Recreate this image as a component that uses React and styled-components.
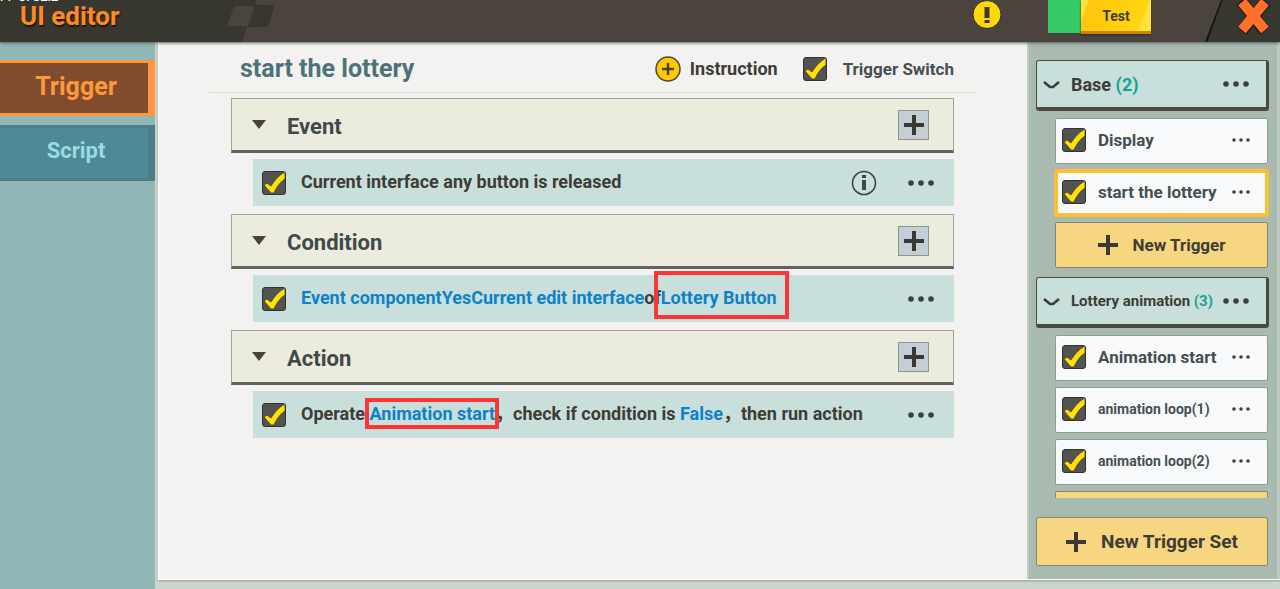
import React, { useState } from "react";
import styled, { createGlobalStyle, css } from "styled-components";

const GlobalStyle = createGlobalStyle`
  * {
    box-sizing: border-box;
  }

  html,
  body,
  #root {
    height: 100%;
    margin: 0;
  }

  body {
    overflow: hidden;
    background: #ccd5cc;
    font-family: Roboto, "Noto Sans CJK SC", sans-serif;
    font-weight: 700;
    color: #3d3c36;
  }

  button {
    font: inherit;
    color: inherit;
    border: none;
    padding: 0;
    background: none;
    cursor: pointer;
  }
`;

const Page = styled.div`
  height: 100%;
  display: flex;
  flex-direction: column;
`;

const TopBar = styled.header`
  position: relative;
  z-index: 2;
  flex: none;
  height: 42px;
  display: flex;
  align-items: flex-start;
  background: #4b443e;
  box-shadow: 0 1px 3px #4f5f58;
`;

const Brand = styled.div`
  width: 220px;
  height: 42px;
  overflow: hidden;
  padding-left: 20px;
  background: #373730;
`;

const Version = styled.div`
  position: absolute;
  left: 0;
  top: -10px;
  font-size: 12px;
  line-height: 14px;
  font-weight: 500;
  color: #fff;
`;

const AppTitle = styled.h1`
  margin: 0;
  font-size: 26px;
  line-height: 32px;
  color: #ff8a22;
  text-shadow: 1px 2px 1px #1c1810;
`;

const Flag = styled.svg`
  flex: none;
  display: block;
`;

const TopSpacer = styled.div`
  flex: 1;
`;

const AlertButton = styled.button`
  margin-right: 46px;
  line-height: 0;
`;

const Meter = styled.div`
  width: 33px;
  height: 33px;
  background: #36ca69;
`;

const TestButton = styled.button`
  width: 70px;
  height: 34px;
  margin-right: 54px;
  border-bottom: 3px solid #cf8200;
  background: linear-gradient(110deg, #ffe03a 9%, #ffc60c 10%, #ffd60f 84%, #ffe43c 85%);
  box-shadow: 0 1px 2px #2c2820;
  font-size: 14px;
  line-height: 30px;
`;

const CloseCorner = styled.div`
  width: 75px;
  height: 42px;
  padding-left: 32px;
  background: linear-gradient(110deg, #16140f 16px, #373730 17px);
  clip-path: polygon(16px 0, 100% 0, 100% 100%, 0 100%);
`;

const CloseButton = styled.button`
  line-height: 0;
`;

const Body = styled.div`
  flex: 1;
  min-height: 0;
  display: flex;
`;

const SideNav = styled.nav`
  flex: none;
  width: 155px;
  padding-top: 18px;
  display: flex;
  flex-direction: column;
  gap: 9px;
  background: #90b6b6;
`;

const NavTab = styled.button`
  height: 56px;
  border-style: solid;
  border-color: #4c7c85;
  border-width: 3px 7px 3px 0;
  background: #4e8a96;
  color: #97dbe3;
  font-size: 22px;
  line-height: 44px;
  padding: 0 0 4px 4px;

  ${({ $active }) =>
    $active &&
    css`
      border-color: #ff983c;
      background: #814c2d;
      color: #ff983c;
      font-size: 25px;
      padding-bottom: 2px;
    `}
`;

const Workspace = styled.div`
  flex: 1;
  min-width: 0;
  margin: 0 0 9px 3px;
  display: flex;
  border-left: 1px solid #fff;
  border-bottom: 1px solid #fff;
  background: #f3f2f0;
  box-shadow: 0 1px 2px #8f9e96;
`;

const Editor = styled.main`
  flex: 1;
  min-width: 0;
  padding: 0 51px 0 50px;
`;

const EditorHead = styled.div`
  height: 51px;
  display: flex;
  align-items: center;
  padding: 3px 22px 0 31px;
  border-bottom: 1px solid #d5dfcc;
`;

const EditorTitle = styled.h2`
  flex: 1;
  margin: 0;
  font-size: 25px;
  line-height: 32px;
  color: #4d727a;
`;

const Instruction = styled.button`
  display: flex;
  align-items: center;
  gap: 9px;
  font-size: 18px;
  margin-right: 25px;
`;

const SwitchLabel = styled.label`
  display: flex;
  align-items: center;
  gap: 16px;
  font-size: 17px;
  color: #454f52;
`;

const Rules = styled.div`
  padding: 5px 22px 0;
`;

const Section = styled.section`
  margin-bottom: 8px;
`;

const SectionBar = styled.div`
  height: 55px;
  display: flex;
  align-items: center;
  padding: 0 24px 0 20px;
  border: 1px solid #a3a29a;
  border-bottom: 3px solid #62625f;
  background: #ebecdd;
`;

const FoldButton = styled.button`
  display: flex;
  width: 35px;
  line-height: 0;
`;

const SectionTitle = styled.h3`
  flex: 1;
  margin: 0;
  padding-top: 4px;
  font-size: 22px;
  line-height: 28px;
  color: #42484a;
`;

const AddButton = styled.button`
  width: 31px;
  height: 30px;
  display: flex;
  align-items: center;
  justify-content: center;
  border: 1px solid #91958f;
  background: #c3cfd5;
`;

const RuleRow = styled.div`
  height: 47px;
  margin: 6px 0 0 22px;
  padding: 0 20px 0 9px;
  display: flex;
  align-items: center;
  background: #c9dfdb;
`;

const RuleText = styled.label`
  flex: 1;
  padding: 0 0 2px 15px;
  font-size: 18px;
  line-height: 24px;
  white-space: nowrap;
`;

const Param = styled.a`
  position: relative;
  color: #0d82c8;
  text-decoration: none;
`;

const Marked = styled(Param)`
  &::after {
    content: "";
    position: absolute;
    inset: ${({ $inset }) => $inset};
    border: 4px solid #ff3434;
  }
`;

const InfoButton = styled.button`
  margin-right: 31px;
  line-height: 0;
`;

const MoreButton = styled.button`
  display: flex;
  align-items: center;
  padding: 8px 0;
`;

const Box = styled.input`
  appearance: none;
  flex: none;
  width: 24px;
  height: 24px;
  margin: 0;
  border: 1px solid #32322f;
  border-radius: 3px;
  background: #535451;
  cursor: pointer;
`;

const BoxWrap = styled.span`
  position: relative;
  flex: none;
  display: flex;

  svg {
    position: absolute;
    inset: 0;
    pointer-events: none;
  }
`;

const SetPanel = styled.aside`
  flex: none;
  width: 253px;
  padding: 18px 9px 13px 7px;
  display: flex;
  flex-direction: column;
  border-left: 2px solid #c0cbc1;
  border-right: 3px solid #c0cbc1;
  background: #a9bbb0;
`;

const SetList = styled.div`
  flex: 1;
  min-height: 0;
  overflow: hidden;
  margin: 0 -3px 19px -1px;
  padding: 0 2px 0 1px;
`;

const SetHeader = styled.div`
  height: 51px;
  margin-bottom: 7px;
  display: flex;
  align-items: center;
  padding: 0 17px 0 6px;
  border: 2px solid #4c4842;
  border-width: 1px 3px 4px 1px;
  border-radius: 3px;
  background: #c9dfdb;
`;

const SetName = styled.h4`
  flex: 1;
  margin: 0;
  padding-left: 11px;
  white-space: nowrap;
  font-size: ${({ $small }) => ($small ? "15px" : "18px")};

  span {
    color: #18a295;
  }
`;

const Items = styled.div`
  display: flex;
  flex-direction: column;
  gap: 6px;
  margin: 0 1px 9px 19px;
`;

const Item = styled.div`
  height: 46px;
  flex: none;
  display: flex;
  align-items: center;
  padding: 0 17px 2px 6px;
  border: 1px solid #8d9b93;
  border-radius: 2px;
  background: #f8f9fb;

  ${({ $selected }) =>
    $selected &&
    css`
      outline: 4px solid #ffbe32;
      outline-offset: -3px;
    `}
`;

const ItemName = styled.label`
  flex: 1;
  padding-left: 12px;
  white-space: nowrap;
  color: #454f52;
  font-size: ${({ $small }) => ($small ? "14px" : "17px")};
`;

const YellowButton = styled.button`
  flex: none;
  height: ${({ $tall }) => ($tall ? "49px" : "46px")};
  display: flex;
  align-items: center;
  justify-content: center;
  gap: 15px;
  border: 1px solid #8c8566;
  border-radius: 2px;
  background: #f6d680;
  font-size: ${({ $tall }) => ($tall ? "19px" : "17px")};
`;

const CheckBox = ({ id }) => {
  const [on, setOn] = useState(true);

  return (
    <BoxWrap>
      <Box id={id} type='checkbox' checked={on} onChange={() => setOn(!on)} />
      {on && (
        <svg width='24' height='24' viewBox='0 0 24 24'>
          <path d='M2 14 L5 12 L9 15 C12 10 17 4 23 1 L23 8 C18 11 14 17 12 22 L9 22 Z' fill='#ffe00a' stroke='#3a3620' strokeWidth='0.7' />
        </svg>
      )}
    </BoxWrap>
  );
};

const Dots = ({ small }) => (
  <svg width={small ? 18 : 26} height='8' viewBox={small ? "0 0 18 8" : "0 0 26 8"} fill='#3b3f40'>
    <circle cx={small ? 2 : 3} cy='4' r={small ? 1.8 : 2.8} />
    <circle cx={small ? 9 : 13} cy='4' r={small ? 1.8 : 2.8} />
    <circle cx={small ? 16 : 23} cy='4' r={small ? 1.8 : 2.8} />
  </svg>
);

const Plus = () => (
  <svg width='20' height='20' viewBox='0 0 20 20'>
    <path d='M10 0 V20 M0 10 H20' stroke='#3a3833' strokeWidth='4' />
  </svg>
);

const More = ({ name, small }) => (
  <MoreButton aria-label={`More options for ${name}`}>
    <Dots small={small} />
  </MoreButton>
);

const rules = [
  {
    title: "Event",
    info: true,
    text: "Current interface any button is released",
  },
  {
    title: "Condition",
    text: (
      <>
        <Param href='#component'>Event componentYesCurrent edit interface</Param>of
        <Marked href='#button' $inset='-16px -12px -11px -7px'>Lottery Button</Marked>
      </>
    ),
  },
  {
    title: "Action",
    text: (
      <>
        Operate <Marked href='#animation' $inset='-5px -4px -5px -4px'>Animation start</Marked>，check if condition is{" "}
        <Param href='#value'>False</Param>，then run action
      </>
    ),
  },
];

const sets = [
  {
    name: "Base",
    count: 2,
    items: [{ name: "Display" }, { name: "start the lottery", selected: true }],
  },
  {
    name: "Lottery animation",
    count: 3,
    small: true,
    items: [
      { name: "Animation start" },
      { name: "animation loop(1)", small: true },
      { name: "animation loop(2)", small: true },
    ],
  },
];

const App = () => {
  const [tab, setTab] = useState("Trigger");

  return (
    <>
      <GlobalStyle />
      <Page>
        <TopBar>
          <Version>PP UI UZIZ</Version>
          <Brand>
            <AppTitle>UI editor</AppTitle>
          </Brand>
          <Flag width='56' height='42' viewBox='0 0 56 42'>
            <path d='M0 0 H37 L22 42 H0 Z' fill='#373730' />
            <path d='M14 6 H35 L28 26 H7 Z' fill='#4b443e' />
            <path d='M35 5 H55 L48 27 H28 Z' fill='#373730' />
          </Flag>
          <TopSpacer />
          <AlertButton aria-label='Warnings'>
            <svg width='30' height='30' viewBox='0 0 30 30'>
              <circle cx='15' cy='14.5' r='14' fill='#ffd80a' stroke='#2f2b22' strokeWidth='1' />
              <path d='M12.5 7 H17.5 V18 H12.5 Z M12.5 20 H17.5 V23 H12.5 Z' fill='#3d3a30' />
            </svg>
          </AlertButton>
          <Meter />
          <TestButton>Test</TestButton>
          <CloseCorner>
            <CloseButton aria-label='Close'>
              <svg width='33' height='36' viewBox='0 0 33 36'>
                <path d='M4 1 L28 31 M29 1 L5 31' stroke='#1d1a14' strokeWidth='12' />
                <path d='M5 2 L28 30 M28 2 L5 30' stroke='#ff702a' strokeWidth='10' />
              </svg>
            </CloseButton>
          </CloseCorner>
        </TopBar>
        <Body>
          <SideNav>
            {["Trigger", "Script"].map((name) => (
              <NavTab key={name} $active={tab === name} onClick={() => setTab(name)}>
                {name}
              </NavTab>
            ))}
          </SideNav>
          <Workspace>
            <Editor>
              <EditorHead>
                <EditorTitle>start the lottery</EditorTitle>
                <Instruction>
                  <svg width='26' height='26' viewBox='0 0 26 26'>
                    <circle cx='13' cy='13' r='12' fill='#ffc805' stroke='#4a463c' strokeWidth='1.5' />
                    <path d='M13 7 V19 M7 13 H19' stroke='#4a4220' strokeWidth='2.4' />
                  </svg>
                  Instruction
                </Instruction>
                <SwitchLabel>
                  <CheckBox />
                  Trigger Switch
                </SwitchLabel>
              </EditorHead>
              <Rules>
                {rules.map(({ title, info, text }) => (
                  <Section key={title}>
                    <SectionBar>
                      <FoldButton aria-label={`Fold ${title}`}>
                        <svg width='14' height='9' viewBox='0 0 14 9'>
                          <path d='M0 0 H14 L7 9 Z' fill='#4a4338' />
                        </svg>
                      </FoldButton>
                      <SectionTitle>{title}</SectionTitle>
                      <AddButton aria-label={`Add ${title}`}>
                        <Plus />
                      </AddButton>
                    </SectionBar>
                    <RuleRow>
                      <CheckBox id={`rule-${title}`} />
                      <RuleText htmlFor={`rule-${title}`}>{text}</RuleText>
                      {info && (
                        <InfoButton aria-label='Info'>
                          <svg width='26' height='26' viewBox='0 0 26 26'>
                            <circle cx='13' cy='13' r='11.5' fill='none' stroke='#3f4648' strokeWidth='1.6' />
                            <path d='M11 10 H15 V20 H11 Z M11 5 H15 V8 H11 Z' fill='#3f4648' />
                          </svg>
                        </InfoButton>
                      )}
                      <More name={title} />
                    </RuleRow>
                  </Section>
                ))}
              </Rules>
            </Editor>
            <SetPanel>
              <SetList>
                {sets.map((set) => (
                  <React.Fragment key={set.name}>
                    <SetHeader>
                      <button aria-label={`Fold ${set.name}`}>
                        <svg width='17' height='9' viewBox='0 0 17 9'>
                          <path d='M1 1 L7 6 H10 L16 1' fill='none' stroke='#3d3c36' strokeWidth='2.6' />
                        </svg>
                      </button>
                      <SetName $small={set.small}>
                        {set.name} <span>({set.count})</span>
                      </SetName>
                      <More name={set.name} />
                    </SetHeader>
                    <Items>
                      {set.items.map((item) => (
                        <Item key={item.name} $selected={item.selected}>
                          <CheckBox id={`item-${item.name}`} />
                          <ItemName htmlFor={`item-${item.name}`} $small={item.small}>
                            {item.name}
                          </ItemName>
                          <More name={item.name} small />
                        </Item>
                      ))}
                      <YellowButton>
                        <Plus />
                        New Trigger
                      </YellowButton>
                    </Items>
                  </React.Fragment>
                ))}
              </SetList>
              <YellowButton $tall>
                <Plus />
                New Trigger Set
              </YellowButton>
            </SetPanel>
          </Workspace>
        </Body>
      </Page>
    </>
  );
};

export default App;
